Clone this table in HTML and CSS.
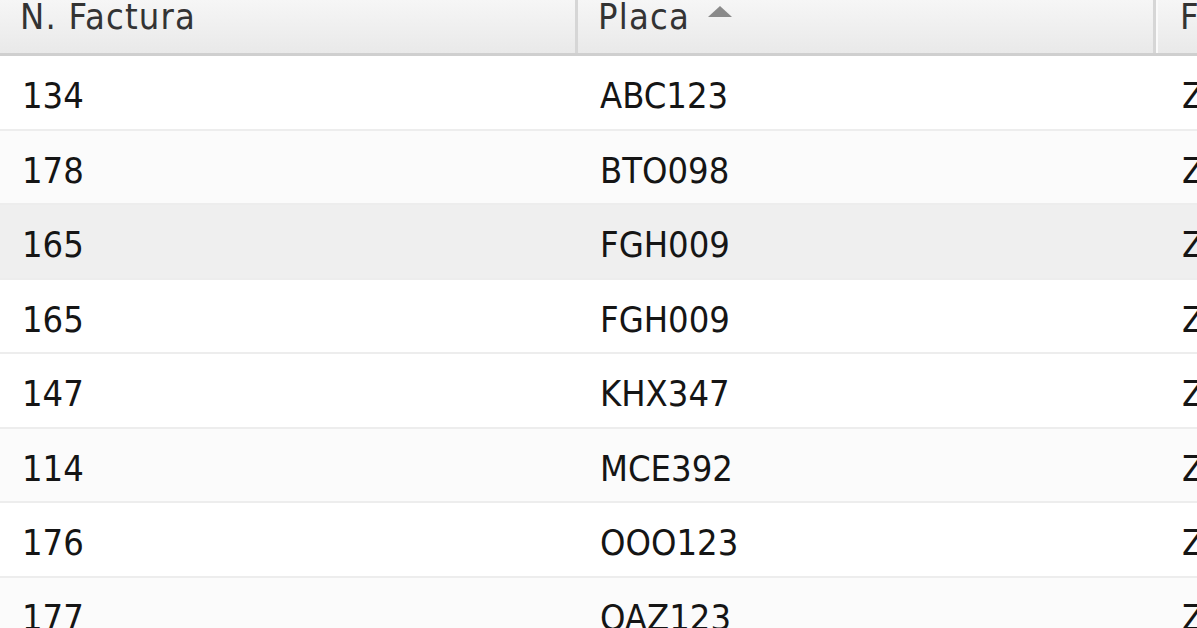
FILE: index.html
```html
<!DOCTYPE html>
<html lang="es">
<head>
<meta charset="utf-8">
<title>Facturas</title>
<link rel="stylesheet" href="styles.css">
</head>
<body>
<div class="grid">
  <div class="header">
    <div class="hcell">N. Factura</div>
    <div class="hcell">Placa <span class="sort"></span></div>
    <div class="hcell">Fecha</div>
  </div>
  <div class="body">
    <div class="row"><div class="cell">134</div><div class="cell">ABC123</div><div class="cell">Zona</div></div>
    <div class="row alt"><div class="cell">178</div><div class="cell">BTO098</div><div class="cell">Zona</div></div>
    <div class="row over"><div class="cell">165</div><div class="cell">FGH009</div><div class="cell">Zona</div></div>
    <div class="row"><div class="cell">165</div><div class="cell">FGH009</div><div class="cell">Zona</div></div>
    <div class="row"><div class="cell">147</div><div class="cell">KHX347</div><div class="cell">Zona</div></div>
    <div class="row alt"><div class="cell">114</div><div class="cell">MCE392</div><div class="cell">Zona</div></div>
    <div class="row"><div class="cell">176</div><div class="cell">OOO123</div><div class="cell">Zona</div></div>
    <div class="row alt"><div class="cell">177</div><div class="cell">OAZ123</div><div class="cell">Zona</div></div>
  </div>
</div>
</body>
</html>
```
FILE: styles.css
```css
html, body {
  margin: 0;
  padding: 0;
  background: #ffffff;
  overflow: hidden;
}
.grid {
  width: 1800px;
  font-family: "DejaVu Sans Condensed", "DejaVu Sans", sans-serif;
  font-size: 36px;
  color: #151515;
}
.header {
  display: flex;
  height: 56px;
  box-sizing: border-box;
  background: linear-gradient(#f6f6f6, #e9e9e9);
  border-bottom: 3px solid #cfcfcf;
}
.hcell {
  width: 578px;
  box-sizing: border-box;
  padding-left: 20px;
  line-height: 34px;
  letter-spacing: 1.2px;
  color: #333333;
  border-right: 3px solid #d6d6d6;
  display: flex;
  align-items: flex-start;
  gap: 18px;
}
.hcell:nth-child(3) {
  padding-left: 22px;
  border-left: 2px solid #fafafa;
}
.sort {
  width: 0;
  height: 0;
  margin-top: 6px;
  border-left: 12px solid transparent;
  border-right: 12px solid transparent;
  border-bottom: 11px solid #8a8a8a;
}
.row {
  display: flex;
  height: 74.5px;
  box-sizing: border-box;
  border-bottom: 2px solid #ededed;
  background: #ffffff;
}
.row.alt {
  background: #fbfbfb;
}
.row.over {
  background: #efefef;
}
.cell {
  width: 578px;
  box-sizing: border-box;
  padding-left: 22px;
  padding-top: 7px;
  display: flex;
  align-items: center;
}
.cell:nth-child(3) {
  padding-left: 26px;
}
```
